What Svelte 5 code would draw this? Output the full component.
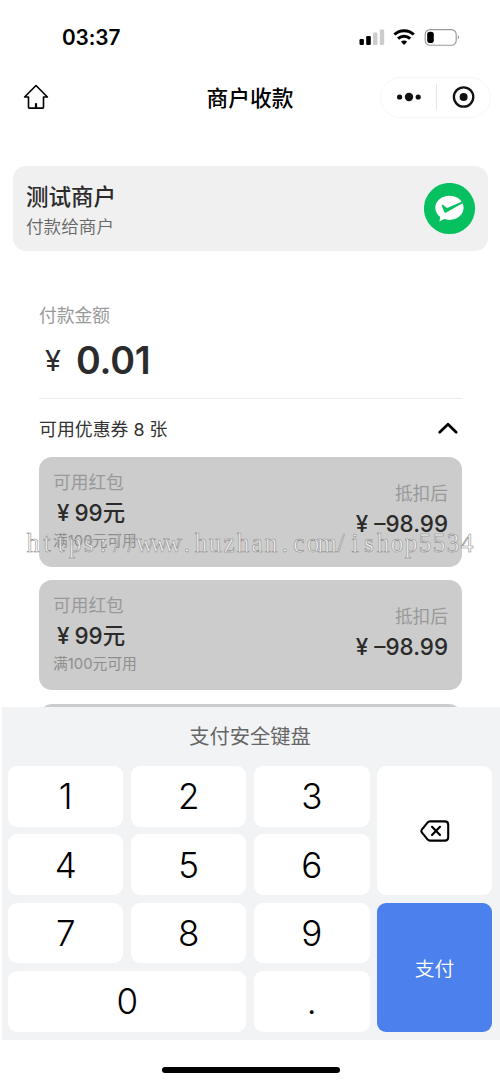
<script>
    const watermark = 'https://www.huzhan.com/ishop5534';
    // 14px 等宽排列，横向缩放 0.9
    const watermarkX = watermark.split('').map((_, i) => ((i * 14 + 7) / 0.9).toFixed(1)).join(' ');

    const amount = '0.01';
    const couponCount = 8;
    const coupons = [
        { id: 1, price: 99, limit: 100, result: '–98.99' },
        { id: 2, price: 99, limit: 100, result: '–98.99' },
        { id: 3, price: 99, limit: 100, result: '–98.99' }
    ];
    const digits = ['1', '2', '3', '4', '5', '6', '7', '8', '9'];
</script>

<div class="page">
    <div class="status-bar">
        <span class="time">03:37</span>
        <svg class="status-icons" width="102" height="20" viewBox="0 0 102 20">
            <rect x="0.5" y="12" width="4.4" height="6" rx="1.2" />
            <rect x="7.2" y="9" width="4.6" height="9" rx="1.2" />
            <rect x="14.1" y="5.5" width="4.4" height="12.5" rx="1.2" fill="#ccc" />
            <rect x="20.8" y="2.5" width="4.4" height="15.5" rx="1.2" fill="#ccc" />
            <g fill="none" stroke="#000" stroke-width="3">
                <path d="M35.4 7.5a14.2 14.2 0 0 1 19.4 0" />
                <path d="M39 11.6a8.8 8.8 0 0 1 12.2 0" />
            </g>
            <path d="M45.1 18l-3.1-3.2a4.4 4.4 0 0 1 6.2 0z" />
            <rect x="66.2" y="2.6" width="31" height="15.6" rx="4.8" fill="none" stroke="#999" stroke-width="1.1" />
            <rect x="68.2" y="4.7" width="6.6" height="11.4" rx="2.8" />
            <path d="M98.8 8.2q2.2 2.2 0 4.4z" fill="#888" />
        </svg>
    </div>

    <div class="nav-bar">
        <svg class="home" width="26" height="26" viewBox="0 0 26 26">
            <path d="M13 1.5L24.4 13h-3.9v10.2q0 .9-.9.9H6.4q-.9 0-.9-.9V13H1.6z" fill="none" stroke="#000" stroke-width="1.6" stroke-linejoin="round" />
            <path d="M13 19.2v4.6" stroke="#000" stroke-width="2.2" />
        </svg>
        <h1>商户收款</h1>
        <div class="capsule">
            <svg width="26" height="12" viewBox="0 0 26 12">
                <circle cx="3.6" cy="6" r="2.6" />
                <circle cx="13" cy="6" r="4.2" />
                <circle cx="22.2" cy="6" r="2.6" />
            </svg>
            <span class="divider"></span>
            <svg width="24" height="24" viewBox="0 0 24 24">
                <circle cx="12.6" cy="12" r="9.7" fill="none" stroke="#111" stroke-width="2.3" />
                <circle cx="12.6" cy="12" r="4" />
            </svg>
        </div>
    </div>

    <div class="merchant">
        <div>
            <div class="merchant-name">测试商户</div>
            <div class="merchant-sub">付款给商户</div>
        </div>
        <svg width="52" height="52" viewBox="0 0 52 52">
            <circle cx="25.5" cy="25.5" r="25.6" fill="#07c160" />
            <path d="M25.6 12.8c-7.9 0-14.3 5.3-14.3 12 0 3.8 2 7 5 9.3l-.9 4.4 4.7-2.4c1.7.5 3.6.8 5.5.8 7.9 0 14-5.4 14-12.1s-6.1-12-14-12z" fill="#fff" />
            <path d="M17.6 22q1.4-.6 2.3.4l2.3 2.1q1 .6 2.1.1L38.6 18.2l.8 1.5L22.3 29.4q-1.5.7-2.2-.7z" fill="#07c160" />
        </svg>
    </div>

    <div class="content">
        <div class="label">付款金额</div>
        <div class="amount"><span class="yen">¥</span><span>{amount}</span></div>
        <div class="coupon-head">
            <span>可用优惠券 {couponCount} 张</span>
            <svg width="22" height="14" viewBox="0 0 22 14">
                <path d="M2.7 11.3L11 3.2l8.2 8.1" fill="none" stroke="#000" stroke-width="2.7" stroke-linecap="round" stroke-linejoin="round" />
            </svg>
        </div>
        <div class="coupons">
            {#each coupons as coupon (coupon.id)}
                <div class="coupon">
                    <div class="left">
                        <div class="coupon-label">可用红包</div>
                        <div class="price"><span class="sign">¥</span>{coupon.price}元</div>
                        <div class="limit">满{coupon.limit}元可用</div>
                    </div>
                    <div class="right">
                        <div class="coupon-label">抵扣后</div>
                        <div class="result"><span class="sign">¥</span>{coupon.result}</div>
                    </div>
                </div>
            {/each}
        </div>
    </div>

    <div class="keyboard">
        <div class="keyboard-title">支付安全键盘</div>
        <div class="keys">
            <div class="digits">
                {#each digits as digit}
                    <button class="key">{digit}</button>
                {/each}
                <button class="key zero">0</button>
                <button class="key">.</button>
            </div>
            <div class="actions">
                <button class="key" aria-label="删除">
                    <svg width="30" height="22" viewBox="0 0 30 22">
                        <path d="M10 1.4h14.8q3.4 0 3.4 3.4v12.4q0 3.4-3.4 3.4H10q-1.5 0-2.5-1.2L2 12.6q-1.3-1.6 0-3.2l5.5-6.8Q8.5 1.4 10 1.4z" fill="none" stroke="#000" stroke-width="2.1" />
                        <path d="M12 6.8l8 8.3M20 6.8l-8 8.3" stroke="#000" stroke-width="2.1" stroke-linecap="round" />
                    </svg>
                </button>
                <button class="key pay">支付</button>
            </div>
        </div>
    </div>
    <div class="home-indicator"></div>

    <svg class="watermark" width="460" height="36" viewBox="0 0 460 36">
        <text x={watermarkX} y="27" transform="scale(0.9 1)">{watermark}</text>
    </svg>
</div>

<style>
    :global(body) {
        margin: 0;
        background: #fff;
    }

    .page {
        position: relative;
        display: flex;
        flex-direction: column;
        width: 500px;
        height: 1083px;
        overflow: hidden;
        background: #fff;
        color: #2b2b2b;
        font-family: Inter, 'Noto Sans CJK SC', sans-serif;
    }

    .status-bar {
        display: flex;
        flex: none;
        justify-content: space-between;
        align-items: center;
        height: 20px;
        padding: 27px 39px 0 62px;
    }

    .time {
        padding-top: 2px;
        font-size: 20.8px;
        font-weight: 600;
        line-height: 20px;
        letter-spacing: -0.1px;
        color: #000;
    }

    .nav-bar {
        display: grid;
        flex: none;
        grid-template-columns: 1fr auto 1fr;
        align-items: center;
        height: 42px;
        margin-top: 29px;
        padding: 0 9px 0 23px;
    }

    h1 {
        margin: 2px 14px 0 0;
        font-size: 21.7px;
        font-weight: 500;
        line-height: 30px;
        color: #000;
    }

    .capsule {
        display: flex;
        justify-content: space-between;
        align-items: center;
        justify-self: end;
        box-sizing: border-box;
        width: 111px;
        height: 41px;
        padding: 0 15px;
        border: 1px solid #f7f7f7;
        border-radius: 21px;
        fill: #111;
    }

    .divider {
        width: 1px;
        height: 26px;
        background: #e5e5e5;
    }

    .merchant {
        display: flex;
        flex: none;
        justify-content: space-between;
        align-items: center;
        box-sizing: border-box;
        width: 475px;
        height: 85px;
        margin: 48px 0 0 13px;
        padding: 0 12px 0 13px;
        border-radius: 13px;
        background: #f0f0f0;
    }

    .merchant-name {
        margin-top: 3px;
        font-size: 22.5px;
        font-weight: 500;
        line-height: 32px;
    }

    .merchant-sub {
        font-size: 17.6px;
        line-height: 27px;
        font-weight: 350;
        color: #666;
    }

    .content {
        flex: 1;
        min-height: 0;
        padding: 52px 38px 0 39px;
        overflow: hidden;
    }

    .label {
        font-size: 17.8px;
        line-height: 26px;
        color: #999;
    }

    .amount {
        display: flex;
        align-items: center;
        box-sizing: border-box;
        height: 70px;
        padding: 0 0 7px 6px;
        border-bottom: 1px solid #ededed;
        font-size: 37.6px;
        font-weight: 600;
        letter-spacing: -0.2px;
    }

    .yen {
        width: 31px;
        font-size: 29px;
        font-weight: 400;
    }

    .coupon-head {
        display: flex;
        justify-content: space-between;
        align-items: center;
        height: 58px;
        padding-right: 3px;
        font-size: 17.9px;
        color: #333;
    }

    .coupons {
        display: flex;
        flex-direction: column;
        gap: 13.4px;
    }

    .coupon {
        display: flex;
        flex: none;
        justify-content: space-between;
        box-sizing: border-box;
        height: 110px;
        padding: 13px 14px 0;
        border-radius: 13px;
        background: #ccc;
    }

    .coupon-label {
        font-size: 17.7px;
        line-height: 26px;
        color: #999;
    }

    .price,
    .result {
        font-size: 22.4px;
        font-weight: 500;
        line-height: 34px;
    }

    .price {
        padding-left: 4px;
    }

    .sign {
        margin-right: 5px;
    }

    .result .sign {
        margin-right: 6px;
    }

    .limit {
        font-size: 14.8px;
        line-height: 22px;
        color: #8e8e8e;
    }

    .right {
        padding-top: 11px;
        text-align: right;
    }

    .keyboard {
        flex: none;
        box-sizing: border-box;
        height: 333px;
        margin-left: 2px;
        padding: 0 8px 0 6px;
        background: #f2f3f5;
    }

    .keyboard-title {
        height: 59px;
        font-size: 20.3px;
        line-height: 60px;
        text-align: center;
        color: #666;
    }

    .keys {
        display: grid;
        grid-template-columns: 361.5px 115px;
        gap: 7.5px;
    }

    .digits {
        display: grid;
        grid-template-columns: repeat(3, 1fr);
        grid-auto-rows: 60.7px;
        gap: 7.7px;
    }

    .actions {
        display: grid;
        grid-template-rows: 1fr 1fr;
        gap: 7.7px;
    }

    .key {
        display: flex;
        justify-content: center;
        align-items: center;
        padding: 0;
        border: none;
        border-radius: 9px;
        background: #fff;
        color: #000;
        font-family: inherit;
        font-size: 35px;
        font-weight: 350;
    }

    .zero {
        grid-column: span 2;
    }

    .pay {
        background: #4c80ed;
        color: #fff;
        font-size: 19.8px;
    }

    .home-indicator {
        flex: none;
        width: 178px;
        height: 6px;
        margin: 27px 0 10px 162px;
        border-radius: 3px;
        background: #000;
    }

    .watermark {
        position: absolute;
        top: 525px;
        left: 26px;
        pointer-events: none;
    }

    .watermark text {
        fill: rgba(255, 255, 255, 0.75);
        stroke: #888;
        stroke-width: 0.6px;
        font-family: 'Liberation Serif', serif;
        font-size: 28px;
        text-anchor: middle;
    }
</style>
